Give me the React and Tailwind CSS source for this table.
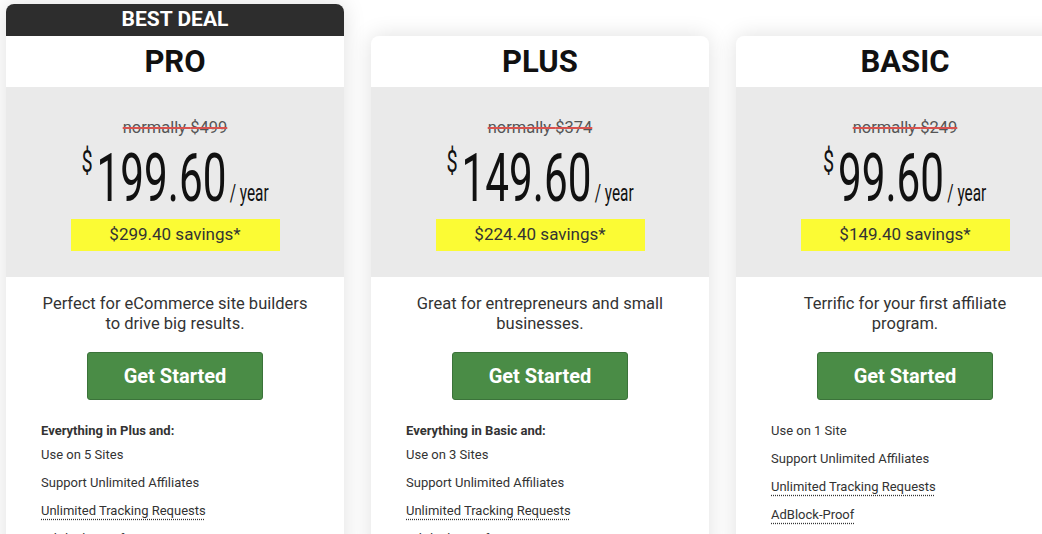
import React from "react";

const plans = [
  {
    name: "PRO",
    badge: "BEST DEAL",
    normally: "$499",
    price: "199.60",
    savings: "$299.40 savings*",
    blurb: ["Perfect for eCommerce site builders", "to drive big results."],
    heading: "Everything in Plus and:",
    features: [
      { text: "Use on 5 Sites" },
      { text: "Support Unlimited Affiliates" },
      { text: "Unlimited Tracking Requests", dotted: true },
      { text: "AdBlock-Proof", dotted: true },
    ],
  },
  {
    name: "PLUS",
    normally: "$374",
    price: "149.60",
    savings: "$224.40 savings*",
    blurb: ["Great for entrepreneurs and small", "businesses."],
    heading: "Everything in Basic and:",
    features: [
      { text: "Use on 3 Sites" },
      { text: "Support Unlimited Affiliates" },
      { text: "Unlimited Tracking Requests", dotted: true },
      { text: "AdBlock-Proof", dotted: true },
    ],
  },
  {
    name: "BASIC",
    normally: "$249",
    price: "99.60",
    savings: "$149.40 savings*",
    blurb: ["Terrific for your first affiliate", "program."],
    features: [
      { text: "Use on 1 Site" },
      { text: "Support Unlimited Affiliates" },
      { text: "Unlimited Tracking Requests", dotted: true },
      { text: "AdBlock-Proof", dotted: true },
    ],
  },
];

function PlanCard({ plan }) {
  return (
    <div
      className={`w-[338px] shrink-0 flex flex-col rounded-t-lg bg-white shadow-[0_0_22px_rgba(0,0,0,0.13)] ${
        plan.badge ? "" : "mt-[32px]"
      }`}
    >
      {/* Badge on the featured plan */}
      {plan.badge && (
        <div className="h-[32px] rounded-t-lg bg-[#2d2d2d] text-white text-[21px] font-bold flex items-center justify-center">
          {plan.badge}
        </div>
      )}

      {/* Plan name */}
      <div
        className={`h-[51px] pt-[2px] flex items-center justify-center text-[31px] font-bold text-[#111] ${
          plan.badge ? "" : "rounded-t-lg"
        }`}
      >
        {plan.name}
      </div>

      {/* Price band */}
      <div className="h-[190px] bg-[#eaeaea] flex flex-col items-center pt-[31px]">
        <div className="h-[20px] leading-[20px] text-[16.5px] text-[#555] line-through decoration-[#d9534f] decoration-2">
          normally {plan.normally}
        </div>
        <div className="mt-[8px] h-[66px] flex justify-center">
          <div className="flex items-baseline leading-none font-normal text-[#111] scale-x-[0.64]">
            <span className="relative -top-[29px] text-[31px] mr-[6px]">$</span>
            <span className="text-[66px]">{plan.price}</span>
            <span className="text-[24px] ml-[5px]">/ year</span>
          </div>
        </div>
        <div className="mt-[7px] w-[209px] h-[32px] bg-[#fbfb34] flex items-center justify-center text-[17px] text-[#333]">
          {plan.savings}
        </div>
      </div>

      {/* Body */}
      <div className="flex flex-col items-center pt-[17px]">
        <p className="text-center text-[16.5px] leading-[20px] text-[#333]">
          {plan.blurb.map((line, i) => (
            <span key={i} className="block">
              {line}
            </span>
          ))}
        </p>
        <button
          type="button"
          className="mt-[18px] w-[176px] h-[48px] rounded-[3px] bg-[#4a8c46] border border-[#3b733a] text-white text-[20px] font-bold"
        >
          Get Started
        </button>
        <div className="self-stretch px-[35px] mt-[17px] text-[13px] text-[#333]">
          {plan.heading && (
            <div className="pt-[4px] leading-[20px] font-bold">{plan.heading}</div>
          )}
          {plan.features.map((f, i) => (
            <div key={i} className="h-[28px] leading-[28px]">
              <span
                className={
                  f.dotted
                    ? "underline decoration-dotted decoration-[#333] underline-offset-[4px]"
                    : ""
                }
              >
                {f.text}
              </span>
            </div>
          ))}
        </div>
      </div>
    </div>
  );
}

export default function App() {
  return (
    <div
      className="h-[534px] overflow-hidden bg-white"
      style={{ fontFamily: "Roboto, 'Liberation Sans', sans-serif" }}
    >
      <div className="flex gap-[27px] pl-[6px] pt-[4px]">
        {plans.map((p) => (
          <PlanCard key={p.name} plan={p} />
        ))}
      </div>
    </div>
  );
}
